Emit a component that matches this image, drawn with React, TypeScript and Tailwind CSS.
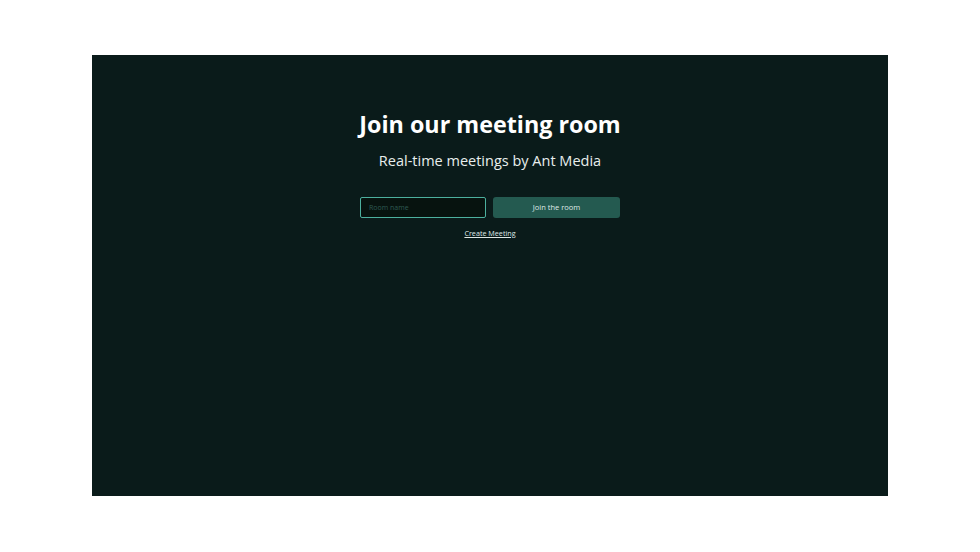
import React from "react";

const App = () => {
  return (
    <div className="w-[980px] h-[552px] bg-white pt-[55px] pl-[92px]" style={{ fontFamily: '"Open Sans", sans-serif' }}>
      <div className="w-[796px] h-[441px] bg-[#0a1b1a] flex flex-col items-center pt-[53px]">
        <h1 className="text-[23.3px] leading-[32px] font-bold text-white">Join our meeting room</h1>
        <p className="mt-[11px] text-[14.5px] leading-[20px] text-[#e8eeed]">Real-time meetings by Ant Media</p>
        <div className="mt-[26px] flex gap-[7px]">
          <input
            placeholder="Room name"
            className="w-[126px] h-[21px] bg-[#07130f] border-[1.5px] border-[#4cb09e] rounded-[2px] px-2 text-[7px] text-white placeholder:text-[#2e5a52] outline-none"
          />
          <button className="w-[127px] h-[21px] bg-[#245a50] rounded-[3px] text-[7.5px] font-medium text-[#dfe9e7]">
            Join the room
          </button>
        </div>
        <a href="#" className="mt-[10px] text-[7.2px] leading-[10px] font-medium text-[#dfe9e7] underline">Create Meeting</a>
      </div>
    </div>
  );
};

export default App;
